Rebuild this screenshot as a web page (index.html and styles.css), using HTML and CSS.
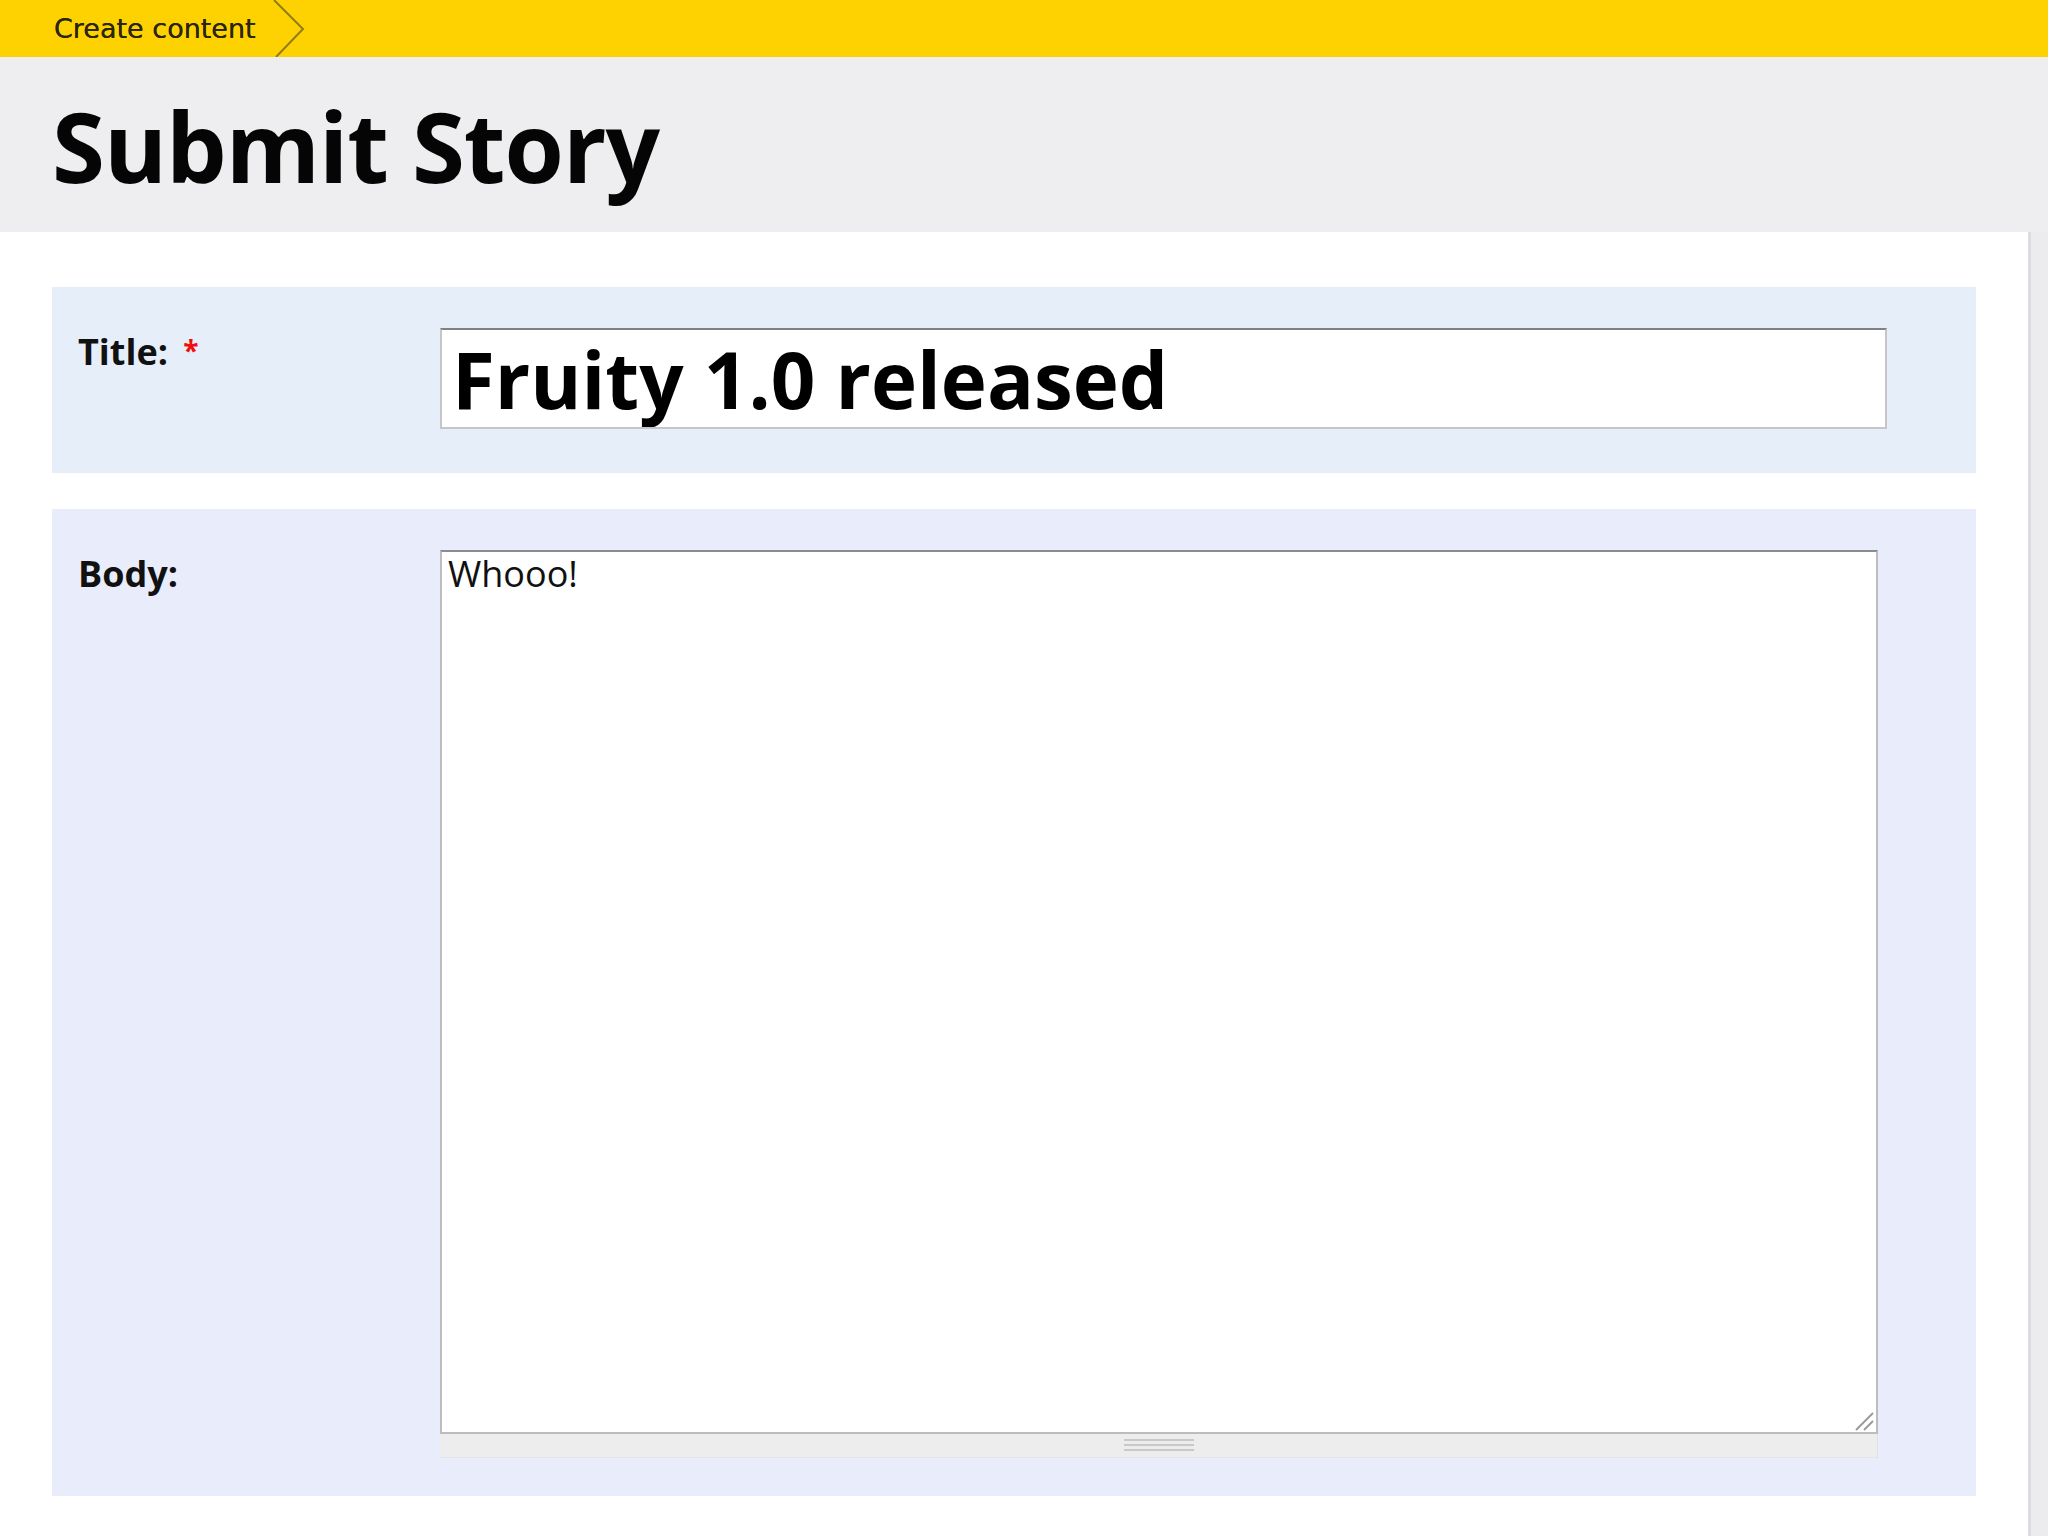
FILE: index.html
```html
<!DOCTYPE html>
<html lang="en">
<head>
<meta charset="utf-8">
<title>Submit Story</title>
<link rel="stylesheet" href="styles.css">
</head>
<body>
  <nav class="crumbs">
    <span class="crumb">Create content</span>
    <svg class="chev" width="34" height="57" viewBox="0 0 34 57" aria-hidden="true">
      <polyline points="1,0 30,29 3,57" fill="none" stroke="#8f7d1c" stroke-width="2"/>
    </svg>
  </nav>
  <header class="page-head">
    <h1 class="page-title">Submit Story</h1>
  </header>
  <div class="page">
    <main class="content">
      <div class="form-item form-title">
        <label class="label" for="edit-title">Title: <span class="req">*</span></label>
        <input id="edit-title" class="text-input" type="text" value="Fruity 1.0 released">
      </div>
      <div class="form-item form-body">
        <label class="label" for="edit-body">Body:</label>
        <div class="textarea-wrap">
          <div class="textarea-box">
            <textarea id="edit-body" class="textarea">Whooo!</textarea>
            <svg class="resizer" width="22" height="22" viewBox="0 0 22 22" aria-hidden="true">
              <line x1="3" y1="20" x2="20" y2="3" stroke="#9a9a9a" stroke-width="2"/>
              <line x1="11" y1="20" x2="20" y2="11" stroke="#9a9a9a" stroke-width="2"/>
            </svg>
          </div>
          <div class="grippie"><span class="grip-lines"></span></div>
        </div>
      </div>
    </main>
    <div class="edge"></div>
  </div>
</body>
</html>
```

FILE: styles.css
```css
html, body {
  margin: 0;
  padding: 0;
  background: #ffffff;
}

body {
  font-family: "Open Sans", "DejaVu Sans", sans-serif;
  color: #000;
}

.crumbs {
  height: 57px;
  background: #fed200;
  display: flex;
  align-items: center;
  padding-left: 54px;
  box-sizing: border-box;
}

.crumb {
  font-family: "DejaVu Sans", sans-serif;
  font-size: 27px;
  color: #2a260c;
  text-shadow: 0 0 0.4px #2a260c;
}

.chev {
  display: block;
  margin-left: 17px;
  align-self: stretch;
}

.page-head {
  height: 175px;
  box-sizing: border-box;
  background: #eeedef;
  padding: 23px 0 0 52px;
}

.page-title {
  margin: 0;
  font-family: "Open Sans", sans-serif;
  font-weight: 700;
  font-size: 96px;
  line-height: normal;
  letter-spacing: -1px;
  color: #050505;
}

.page {
  display: flex;
  min-height: calc(100vh - 232px);
}

.content {
  flex: 1;
  padding: 55px 52px 40px 52px;
  display: flex;
  flex-direction: column;
  gap: 36px;
}

.edge {
  width: 20px;
  flex: none;
  background: #ecebee;
  border-left: 3px solid #dddce0;
  box-sizing: border-box;
}

.form-item {
  display: grid;
  grid-template-columns: 362px auto;
  align-items: start;
  padding-left: 26px;
}

.form-title {
  background: #e6eefa;
  height: 186px;
  box-sizing: border-box;
  padding-top: 41px;
}

.form-body {
  background: #e8ecfb;
  height: 987px;
  box-sizing: border-box;
  padding-top: 41px;
}

.label {
  font-family: "Open Sans", sans-serif;
  font-weight: 700;
  font-size: 36px;
  line-height: 50px;
  margin-top: -3px;
  color: #111;
}

.form-body .label {
  margin-top: -1px;
}

.req {
  color: #f20d0d;
  font-size: 28px;
  vertical-align: 4px;
  margin-left: 6px;
}

.text-input {
  width: 1447px;
  height: 101px;
  box-sizing: border-box;
  margin: 0;
  padding: 0 10px;
  border: 2px solid #c6c6c8;
  border-top-color: #7f8185;
  background: #fff;
  font-family: "Open Sans", sans-serif;
  font-weight: 700;
  font-size: 78px;
  color: #000;
  outline: none;
}

.textarea-wrap {
  width: 1438px;
}

.textarea-box {
  position: relative;
}

.textarea {
  display: block;
  width: 1438px;
  height: 884px;
  box-sizing: border-box;
  margin: 0;
  padding: 0 6px;
  border: 2px solid #bdbdbf;
  border-top-color: #8a8c90;
  background: #fff;
  font-family: "Open Sans", sans-serif;
  font-size: 36px;
  line-height: 1.2;
  color: #111;
  resize: none;
  outline: none;
}

.resizer {
  position: absolute;
  right: 3px;
  bottom: 2px;
}

.grippie {
  height: 24px;
  box-sizing: border-box;
  background: #eeedee;
  border-right: 1px solid #e2e2e4;
  border-bottom: 1px solid #e4e4e8;
  display: flex;
  justify-content: center;
  align-items: center;
}

.grip-lines {
  width: 70px;
  height: 13px;
  background: repeating-linear-gradient(to bottom, #c9c9cb 0, #c9c9cb 2px, transparent 2px, transparent 5px);
}
```
